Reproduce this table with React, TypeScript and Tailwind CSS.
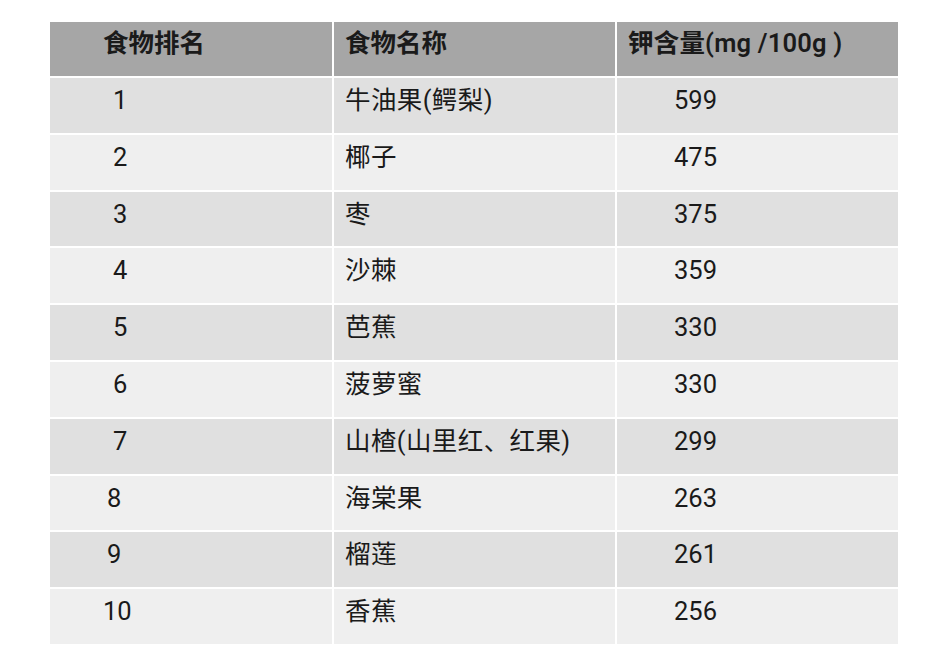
import React from "react";

const rows = [
  { rank: "1", name: "牛油果(鳄梨)", k: "599", pad: "pl-[63px]" },
  { rank: "2", name: "椰子", k: "475", pad: "pl-[63px]" },
  { rank: "3", name: "枣", k: "375", pad: "pl-[63px]" },
  { rank: "4", name: "沙棘", k: "359", pad: "pl-[63px]" },
  { rank: "5", name: "芭蕉", k: "330", pad: "pl-[63px]" },
  { rank: "6", name: "菠萝蜜", k: "330", pad: "pl-[63px]" },
  { rank: "7", name: "山楂(山里红、红果)", k: "299", pad: "pl-[63px]" },
  { rank: "8", name: "海棠果", k: "263", pad: "pl-[57px]" },
  { rank: "9", name: "榴莲", k: "261", pad: "pl-[57px]" },
  { rank: "10", name: "香蕉", k: "256", pad: "pl-[53px]" },
];

export default function App() {
  return (
    <div
      className="w-[947px] h-[669px] bg-white pt-[22px] pl-[50px] text-[#1a1a1a]"
      style={{ fontFamily: '"Roboto", "Noto Sans CJK SC", sans-serif' }}
    >
      <div className="grid grid-cols-[282px_281px_281px] gap-[2px] w-[848px] text-[25.5px] leading-[30px]">
        {/* header */}
        <div className="h-[54px] bg-[#a6a6a6] pl-[53px] pt-[6px] font-semibold">食物排名</div>
        <div className="h-[54px] bg-[#a6a6a6] pl-[11px] pt-[6px] font-semibold">食物名称</div>
        <div className="h-[54px] bg-[#a6a6a6] pl-[11px] pt-[6px] font-semibold tracking-[0.2px]">钾含量(mg /100g )</div>

        {rows.map((r, i) => {
          const bg = i % 2 === 0 ? "bg-[#e0e0e0]" : "bg-[#efefef]";
          return (
            <React.Fragment key={r.rank}>
              <div className={`h-[54.8px] ${bg} ${r.pad} pt-[7px]`}>{r.rank}</div>
              <div className={`h-[54.8px] ${bg} pl-[11px] pt-[7px] tracking-[0.4px]`}>{r.name}</div>
              <div className={`h-[54.8px] ${bg} pl-[57px] pt-[7px]`}>{r.k}</div>
            </React.Fragment>
          );
        })}
      </div>
    </div>
  );
}
